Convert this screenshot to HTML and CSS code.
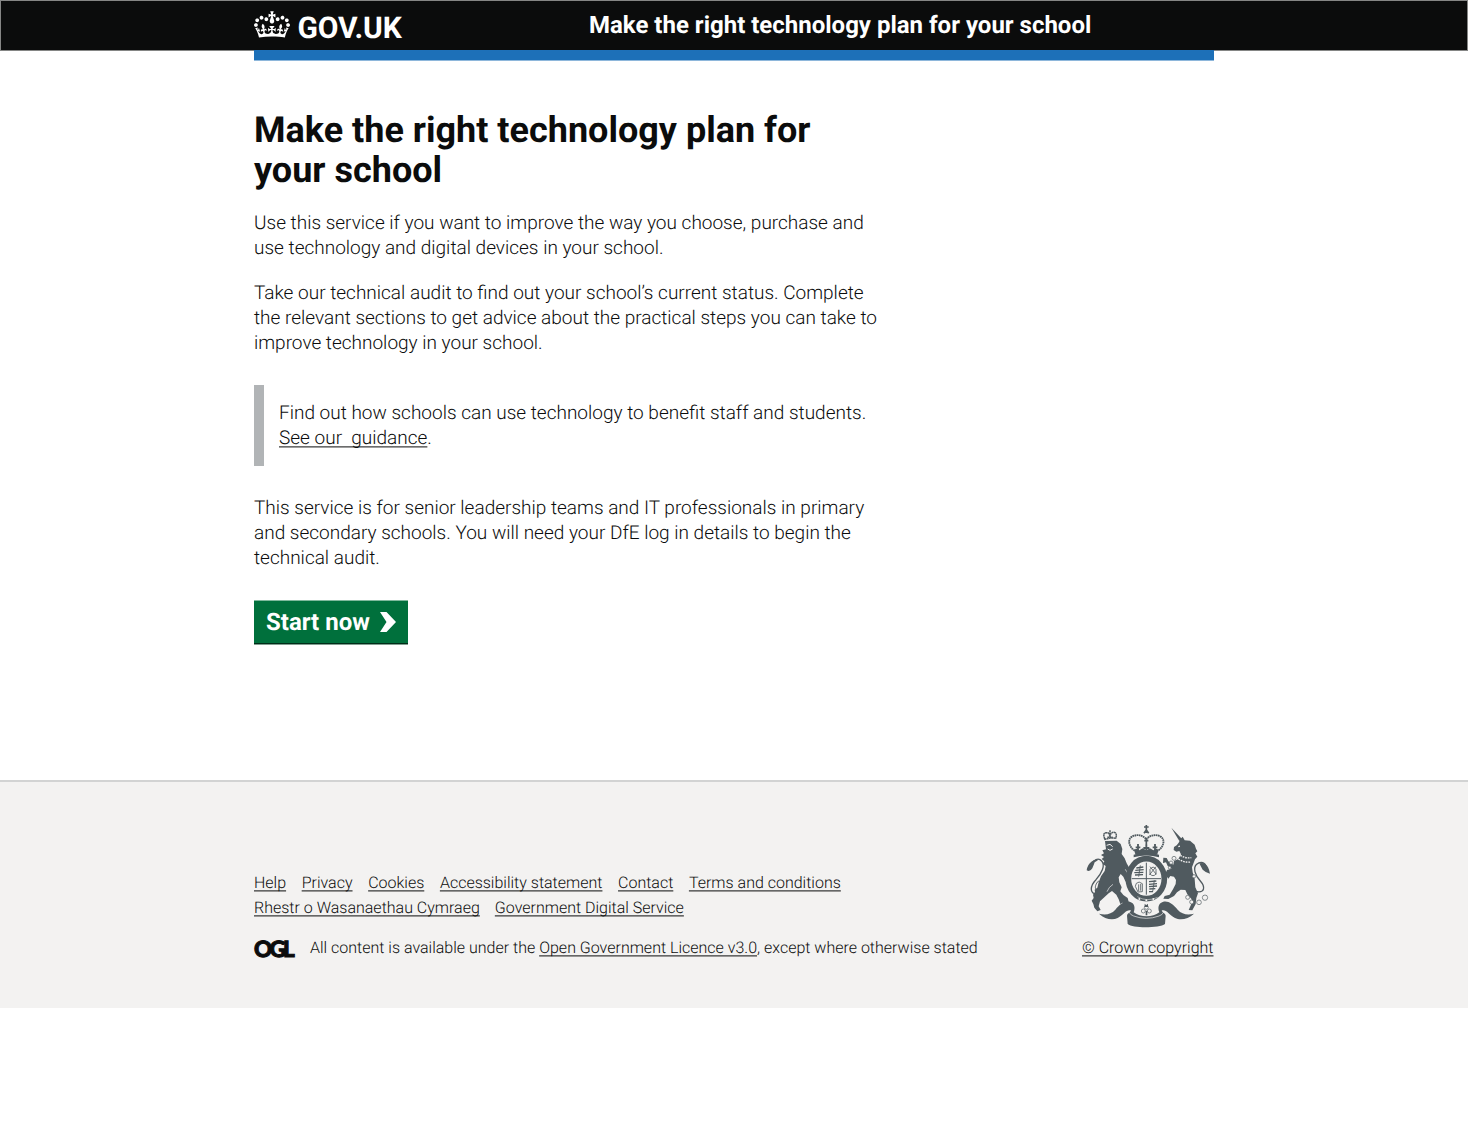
FILE: index.html
```html
<!DOCTYPE html>
<html lang="en">
<head>
<meta charset="utf-8">
<title>Make the right technology plan for your school</title>
<link rel="stylesheet" href="styles.css">
</head>
<body>
<header class="header">
  <div class="container header-inner">
    <a class="logo" href="#">
      <svg class="crown" viewBox="0 0 132 97" aria-hidden="true"><path d="M25 30.2c3.5 1.5 7.7-.2 9.1-3.7 1.5-3.6-.2-7.8-3.9-9.2-3.6-1.4-7.6.3-9.1 3.9-1.4 3.5.3 7.5 3.9 9zM9 39.5c3.6 1.5 7.8-.2 9.2-3.7 1.5-3.6-.2-7.8-3.9-9.1-3.6-1.5-7.6.2-9.1 3.8-1.4 3.5.3 7.5 3.8 9zM4.4 57.2c3.5 1.5 7.7-.2 9.1-3.8 1.5-3.6-.2-7.7-3.9-9.1-3.5-1.5-7.6.3-9.1 3.8-1.4 3.5.3 7.6 3.9 9.1zm38.3-21.4c3.5 1.5 7.7-.2 9.1-3.8 1.5-3.6-.2-7.7-3.9-9.1-3.6-1.5-7.6.3-9.1 3.8-1.3 3.6.4 7.7 3.9 9.1zm64.4-5.6c-3.6 1.5-7.8-.2-9.1-3.7-1.5-3.6.2-7.8 3.8-9.2 3.6-1.4 7.7.3 9.2 3.9 1.3 3.5-.4 7.5-3.9 9zm15.9 9.3c-3.6 1.5-7.7-.2-9.1-3.7-1.5-3.6.2-7.8 3.7-9.1 3.6-1.5 7.7.2 9.2 3.8 1.5 3.5-.3 7.5-3.8 9zm4.7 17.7c-3.6 1.5-7.8-.2-9.2-3.8-1.5-3.6.2-7.7 3.9-9.1 3.6-1.5 7.7.3 9.2 3.8 1.3 3.5-.4 7.6-3.9 9.1zM89.3 35.8c-3.6 1.5-7.8-.2-9.2-3.8-1.4-3.6.2-7.7 3.9-9.1 3.6-1.5 7.7.3 9.2 3.8 1.4 3.6-.3 7.7-3.9 9.1zM69.7 17.7l8.9 4.7V9.3l-8.9 2.8c-.2-.3-.5-.6-.9-.9L72.4 0H59.6l3.5 11.2c-.3.3-.6.5-.9.9l-8.8-2.8v13.1l8.8-4.7c.3.3.6.7.9.9l-5 15.4v.1c-.2.8-.4 1.6-.4 2.4 0 4.1 3.1 7.5 7 8.1h.2c.3 0 .7.1 1 .1.4 0 .7 0 1-.1h.2c4-.6 7.1-4.1 7.1-8.1 0-.8-.1-1.7-.4-2.4V34l-5.1-15.4c.4-.2.7-.6 1-.9zM66 92.8c16.9 0 32.8 1.1 47.1 3.2 4-16.9 8.9-26.7 14-33.5l-9.6-3.4c1 4.9 1.1 7.2 0 10.2-1.5-1.4-3-4.3-4.2-8.7L108.6 76c2.8-2 5-3.2 7.5-3.3-4.4 9.4-10 11.9-13.6 11.2-4.3-.8-6.3-4.6-5.6-7.9 1-4.7 5.7-5.9 8-.5 4.3-8.7-3-11.4-7.6-8.8 7.1-7.2 7.9-13.5 2.1-21.1-8 6.1-8.1 12.3-4.5 20.8-4.7-5.4-12.1-2.5-9.5 6.2 3.4-5.2 7.9-2 7.2 3.1-.6 4.3-6.4 7.8-13.5 7.2-10.3-.9-10.9-8-11.2-13.8 2.5-.5 7.1 1.8 11 7.3L80.2 60c-4.1 4.4-8 5.3-12.3 5.4 1.4-4.4 8-11.6 8-11.6H55.5s6.4 7.2 7.9 11.6c-4.2-.1-8-1-12.3-5.4l1.4 16.4c3.9-5.5 8.5-7.7 10.9-7.3-.3 5.8-.9 12.8-11.1 13.8-7.2.6-12.9-2.9-13.5-7.2-.7-5 3.8-8.3 7.1-3.1 2.7-8.7-4.6-11.6-9.4-6.2 3.7-8.5 3.6-14.7-4.6-20.8-5.8 7.6-5 13.9 2.2 21.1-4.7-2.6-11.9.1-7.7 8.8 2.3-5.5 7.1-4.2 8.1.5.7 3.3-1.3 7.1-5.7 7.9-3.5.7-9-1.8-13.5-11.2 2.5.1 4.7 1.3 7.5 3.3l-4.7-15.4c-1.2 4.4-2.7 7.2-4.3 8.7-1.1-3-.9-5.3 0-10.2l-9.5 3.4c5 6.9 9.9 16.7 14 33.5 14.8-2.1 30.8-3.2 47.7-3.2z"/></svg>
      <span>GOV.UK</span>
    </a>
    <a class="service-name" href="#">Make the right technology plan for your school</a>
  </div>
</header>
<div class="container"><div class="blue-bar"></div></div>

<main class="container main">
  <h1>Make the right technology plan for<br>your school</h1>
  <p>Use this service if you want to improve the way you choose, purchase and<br>use technology and digital devices in your school.</p>
  <p>Take our technical audit to find out your school’s current status. Complete<br>the relevant sections to get advice about the practical steps you can take to<br>improve technology in your school.</p>
  <div class="inset"><p>Find out how schools can use technology to benefit staff and students.<br><a href="#">See our &nbsp;guidance</a>.</p></div>
  <p>This service is for senior leadership teams and IT professionals in primary<br>and secondary schools. You will need your DfE log in details to begin the<br>technical audit.</p>
  <a class="start" href="#">
    <span>Start now</span>
    <svg class="chevron" viewBox="0 0 16 20" aria-hidden="true"><path d="M0 0h6.500L16 10 6.500 20H0l6.500-10z"/></svg>
  </a>
</main>

<footer class="footer">
  <div class="container footer-inner">
    <div class="footer-meta">
      <nav class="links links-first">
        <a href="#">Help</a><a href="#">Privacy</a><a href="#">Cookies</a><a href="#">Accessibility statement</a><a href="#">Contact</a><a href="#">Terms and conditions</a>
      </nav>
      <nav class="links">
        <a href="#">Rhestr o Wasanaethau Cymraeg</a><a href="#">Government Digital Service</a>
      </nav>
      <div class="licence">
        <span class="ogl">OGL</span>
        <span class="licence-text">All content is available under the <a href="#">Open Government Licence v3.0</a>, except where otherwise stated</span>
      </div>
    </div>
    <div class="copyright">
      <svg class="crest" viewBox="27 18 378 315" aria-hidden="true">
        <!-- central crown -->
        <path class="line" d="M176 98C158 86 154 64 168 56c15-9 34-4 43 8 9-12 29-17 43-8 14 8 10 30-8 42" stroke-width="5.500" stroke-dasharray="5 1.500"/>
        <path class="line" d="M211 62v20M205 68h12M211 21v24M204 27h14M204 46l7-10 7 10" stroke-width="5"/>
        <path class="line" d="M186 78v20M179 88h14M237 78v20M230 88h14M211 80v18M202 90h18" stroke-width="5.500"/>
        <path d="M174 95l7-3 9 5 10-6 11 6 11-6 10 6 9-5 7 3-4 14q-33-9-66 0zM173 110q38-11 76 0v8q-38-11-76 0z"/>
        <!-- motto ribbon -->
        <path d="M69 287c20 5 36 2 49-12 16-18 29-28 45-23 13 4 15 18 10 31 20 16 57 16 77 0-5-13-3-27 10-31 16-5 29 5 45 23 13 14 29 17 49 12-18 17-41 21-57 13-18-10-25-25-38-23-7 2 9 8 10 16l-2 25c-16 12-96 14-112 0l-2-25c1-8 17-14 10-16-13-2-20 13-38 23-16 8-38 4-56-13z"/>
        <path class="gap" d="M159 282q4 9 14 12 38 14 76 0 10-3 14-12" stroke-width="2"/>
        <!-- lion -->
        <path class="line" d="M87 64q-9-20 5-20 9 0 10 13 1-14 11-14 12 1 6 19M102 37v12M94 58h16M85 65q17-7 35-4" stroke-width="4.500" stroke-dasharray="6 1"/>
        <g transform="translate(30 18)">
          <path d="M57 51L92 50L104 60L109 75L107 90L116 103L122 118L130 132L134 150L140 162L138 174L128 180L118 172L112 158L104 150L98 160L100 175L107 190L103 202L112 213L125 222L128 233L120 240L110 236L103 240L98 226L91 212L78 201L68 208L55 220L42 232L38 247L44 258L34 262L25 251L22 240L17 230L23 222L21 212L27 204L26 197L34 191L38 175L45 157L56 141L59 126L50 120L55 112L47 105L54 99L45 93L54 88L49 79L60 76Z"/>
          <path class="gap" d="M62 64l10-3 8 7M65 75l7 4 8-4" stroke-width="3"/>
          <path class="gap" d="M63 203q5-14 18-22M118 136q7 9 7 20" stroke-width="2"/>
          <path class="line" d="M34 210C8 211 13 184 30 167C47 148 59 123 47 111C37 99 22 108 16 121" stroke-width="4"/>
          <path class="line" d="M37 199C23 199 27 179 39 170" stroke-width="3"/>
          <path d="M2 139Q4 122 16 113Q28 104 36 109Q31 112 26 115Q23 124 19 133Q12 145 2 139Z"/>
        </g>
        <!-- unicorn -->
        <path d="M286 29l32 34-8 6z"/>
        <g transform="translate(210 18)">
          <path d="M98 56L103 46L110 38L116 49L132 50L146 62L150 74L154 82L148 88L154 98L147 106L142 119L138 130L140 145L146 165L148 190L156 208L151 222L149 240L139 259L128 258L136 240L137 226L124 211L118 198L104 197L93 205L84 216L67 225L52 224L56 216L71 212L81 196L89 180L90 168L84 158L73 156L67 164L57 151L63 138L77 134L65 126L60 115L51 117L52 101L62 102L67 112L82 122L84 111L97 105L105 91L100 81L91 83L83 78L84 69L92 64Z"/>
          <path class="gap" d="M97 68l7-2M97 105q18 12 38 9M103 94q15 10 33 7" stroke-width="4" stroke-dasharray="5 3"/>
          <path class="line" d="M148 202C178 209 178 188 163 171C147 153 140 132 152 121C165 110 178 116 180 129" stroke-width="4"/>
          <path d="M160 118Q178 113 186 130Q191 140 192 149Q178 145 170 137L164 126Z"/>
        </g>
        <g class="ring">
          <circle cx="294" cy="121" r="6"/><circle cx="285" cy="134" r="5"/><circle cx="281" cy="149" r="4"/>
          <circle cx="354" cy="175" r="5"/><circle cx="335" cy="238" r="6"/><circle cx="347" cy="252" r="6"/><circle cx="369" cy="253" r="7"/><circle cx="387" cy="239" r="8"/>
        </g>
        <!-- garter and shield -->
        <ellipse class="disc" cx="211" cy="182" rx="54" ry="60" stroke-width="17"/>
        <path class="line" d="M167 182h88M211 134v96" stroke-width="3"/>
        <path class="line" d="M181 150l21-3m-24 10 25-2m-28 9 27-1m-25 8 24-1M219 191l22-2m-22 10 24-2m-24 9 24-2m-23 9 18-1m-7 9h-12" stroke-width="4"/>
        <path class="line" d="M193 142l-5 34M235 187l-5 34M181 196q8-8 18 1v24l-13 1-8-17zM188 199v20M194 198v20M222 146l19 23M240 146l-20 25M222 154q10-13 18 0v14q-9 10-18 0z" stroke-width="2.500"/>
        <path class="gap" d="M184 236q28 17 61 2" stroke-width="1.500"/>
        <circle class="dot" cx="190" cy="243" r="3"/><circle class="dot" cx="211" cy="247" r="3"/><circle class="dot" cx="232" cy="243" r="3"/>
        <g class="ring"><circle cx="211" cy="268" r="6"/><circle cx="202" cy="279" r="6"/><circle cx="220" cy="279" r="6"/></g>
        <path d="M206 257l5 5 5-5v10h-10zM209 278h5v14h-5z"/>
      </svg>
      <a href="#">© Crown copyright</a>
    </div>
  </div>
</footer>
</body>
</html>
```
FILE: styles.css
```css
* { box-sizing: border-box; }
body { margin: 0; background: #fff; color: #0b0c0c; font-family: Roboto, sans-serif; font-weight: 300; font-size: 19px; line-height: 25px; text-rendering: geometricPrecision; }
a { color: inherit; text-decoration: underline; text-decoration-thickness: 1px; text-underline-offset: 2px; text-decoration-skip-ink: none; }
.container { width: 960px; margin: 0 auto; }
.header { height: 51px; background: #0b0c0c; border: 1px solid #858685; }
.header-inner { display: flex; height: 49px; }
.logo { display: flex; width: 335px; color: #fff; font-size: 30px; font-weight: 700; line-height: 55px; text-decoration: none; letter-spacing: -0.1px; }
.crown { width: 36px; height: 27px; margin: 10px 7.500px 0 0; fill: #fff; }
.service-name { color: #fff; font-size: 24px; font-weight: 700; line-height: 49px; text-decoration: none; white-space: nowrap; }
.blue-bar { height: 11px; margin-top: -1px; position: relative; background: #1d70b8; border-bottom: 1px solid #8eb7db; }
.main { height: 719px; padding-top: 50px; }
.main p { margin: 0 0 20px; white-space: nowrap; transform: translateY(-0.6px); }
h1 { margin: 0 0 20px; font-size: 36px; line-height: 40px; font-weight: 700; transform: translateY(-0.6px); }
.inset { height: 81px; margin: 29px 0; padding: 16px 0 0 15px; border-left: 10px solid #b1b4b6; }
.start { display: flex; align-items: flex-start; width: 154px; height: 45px; margin-top: 29px; padding: 10px 12px 0; background: linear-gradient(#80b99d 1px, #00703c 1px 43px, #002d18 43px 44px, #809e8f 44px); color: #fff; font-size: 24px; font-weight: 700; text-decoration: none; white-space: nowrap; }
.main .inset + p { margin: 30px 0 29px; }
.chevron { width: 16px; height: 20px; margin: 2px 0 0 10px; fill: #fff; flex: none; }
.footer { height: 228px; background: #f3f2f1; border-top: 2px solid #d2d3d3; font-size: 16px; line-height: 25px; }
.footer-inner { display: flex; justify-content: space-between; }
.footer-meta { padding-top: 89px; }
.links { display: flex; gap: 15px; white-space: nowrap; }
.links-first { gap: 15.6px; }
.links, .licence-text, .copyright a { transform: translateY(-0.6px); }
.licence { display: flex; margin-top: 15px; white-space: nowrap; }
.ogl { width: 56px; font-family: Lato, sans-serif; font-size: 22.500px; font-weight: 900; letter-spacing: -2.800px; -webkit-text-stroke: 1px #0b0c0c; }
.copyright { display: flex; flex-direction: column; align-items: flex-end; padding: 42px 0.500px 0 0; }
.crest { width: 126px; height: 105px; margin: 0 2.500px 7px 0; fill: #505a5f; }
.line { fill: none; stroke: #505a5f; }
.disc { fill: #f3f2f1; stroke: #505a5f; }
.gap { fill: none; stroke: #f3f2f1; }
.dot { fill: #f3f2f1; }
.ring { fill: #f3f2f1; stroke: #505a5f; stroke-width: 2; }
```
